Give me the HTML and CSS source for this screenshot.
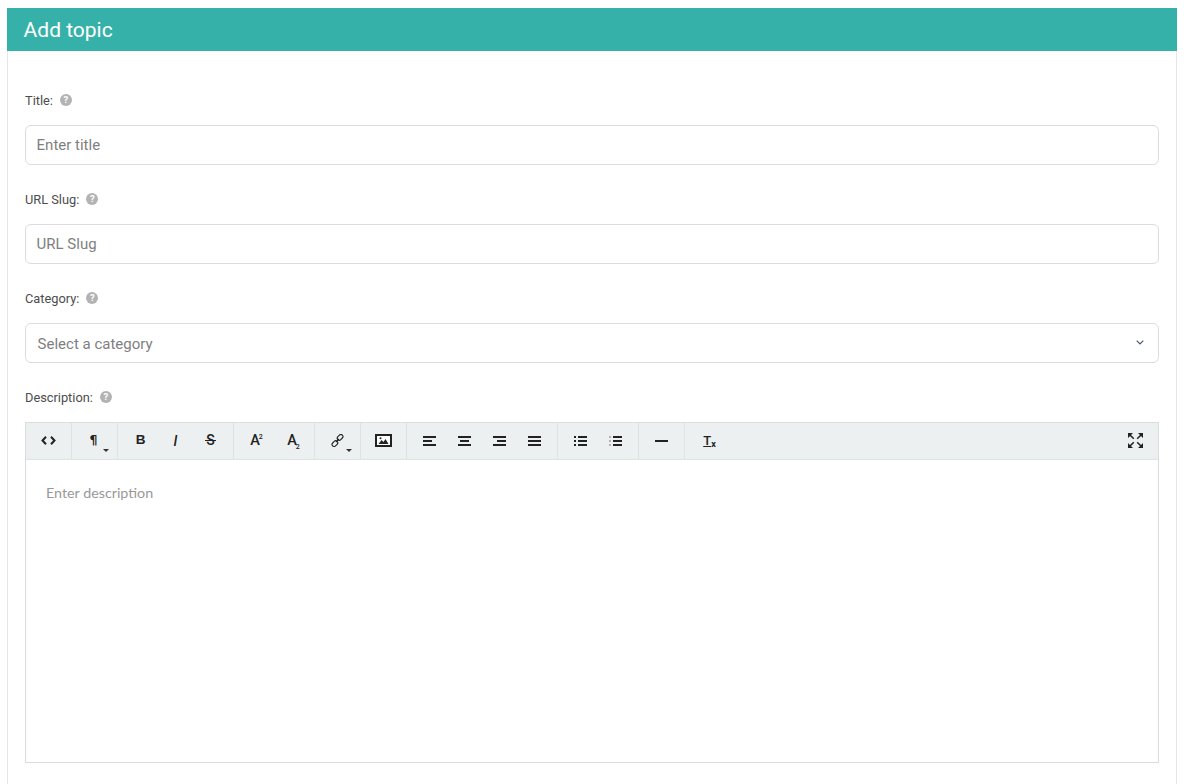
FILE: index.html
```html
<!DOCTYPE html>
<html lang="en">
<head>
<meta charset="utf-8">
<title>Add topic</title>
<link rel="stylesheet" href="styles.css">
</head>
<body>
<main class="card">
  <header class="card-header"><h1>Add topic</h1></header>
  <form class="card-body">
    <div class="field">
      <label class="label">Title: <span class="help">?</span></label>
      <input class="control" type="text" placeholder="Enter title">
    </div>
    <div class="field">
      <label class="label">URL Slug: <span class="help">?</span></label>
      <input class="control" type="text" placeholder="URL Slug">
    </div>
    <div class="field">
      <label class="label">Category: <span class="help">?</span></label>
      <div class="control select">
        <span>Select a category</span>
        <svg class="chevron" width="8" height="5" viewBox="0 0 8 5"><path d="M.7.7 4 4 7.3.7" fill="none" stroke="#44536a" stroke-width="1.1"/></svg>
      </div>
    </div>
    <div class="field">
      <label class="label">Description: <span class="help">?</span></label>
      <div class="editor">
        <div class="toolbar">
          <div class="group">
            <button type="button" class="btn"><svg width="15" height="9" viewBox="0 0 15 9"><path d="M5 .7 1.5 4.5 5 8.3M10 .7l3.5 3.8L10 8.3" fill="none" stroke="#222" stroke-width="2"/></svg></button>
          </div>
          <div class="group">
            <button type="button" class="btn"><span class="glyph para">¶</span><i class="caret"></i></button>
          </div>
          <div class="group">
            <button type="button" class="btn"><span class="glyph bold">B</span></button>
            <button type="button" class="btn"><span class="glyph italic">I</span></button>
            <button type="button" class="btn"><span class="glyph strike">S</span></button>
          </div>
          <div class="group">
            <button type="button" class="btn"><span class="glyph sized">A<sup>2</sup></span></button>
            <button type="button" class="btn shift"><span class="glyph sized">A<sub>2</sub></span></button>
          </div>
          <div class="group">
            <button type="button" class="btn"><svg class="link-icon" width="13" height="13" viewBox="0 0 14 14"><g fill="none" stroke="#222" stroke-width="1.2"><rect x="6.4" y="1.4" width="6.8" height="4.4" rx="2.2" transform="rotate(-45 9.8 3.6)"/><rect x="0.8" y="8.2" width="6.8" height="4.4" rx="2.2" transform="rotate(-45 4.2 10.4)"/><path d="M5.4 8.6 8.6 5.4"/></g></svg><i class="caret"></i></button>
          </div>
          <div class="group">
            <button type="button" class="btn"><svg width="17" height="13" viewBox="0 0 17 13"><rect x="1" y="1" width="15" height="11" fill="#fff" stroke="#222" stroke-width="2"/><path d="M3.5 10l3-4 2 2 2-3 3 5z" fill="#222"/><circle cx="5.5" cy="4.2" r="1" fill="#222"/></svg></button>
          </div>
          <div class="group">
            <button type="button" class="btn"><svg class="lines" width="13" height="10" viewBox="0 0 13 10"><path d="M0 1h13M0 5h9M0 9h13"/></svg></button>
            <button type="button" class="btn"><svg class="lines" width="13" height="10" viewBox="0 0 13 10"><path d="M0 1h13M2 5h9M0 9h13"/></svg></button>
            <button type="button" class="btn"><svg class="lines" width="13" height="10" viewBox="0 0 13 10"><path d="M0 1h13M4 5h9M0 9h13"/></svg></button>
            <button type="button" class="btn"><svg class="lines" width="13" height="10" viewBox="0 0 13 10"><path d="M0 1h13M0 5h13M0 9h13"/></svg></button>
          </div>
          <div class="group">
            <button type="button" class="btn"><svg class="lines" width="13" height="10" viewBox="0 0 13 10"><path d="M4 1h9M4 5h9M4 9h9"/><path d="M0 1h2M0 5h2M0 9h2"/></svg></button>
            <button type="button" class="btn"><svg class="lines" width="13" height="10" viewBox="0 0 13 10"><path d="M4 1h9M4 5h9M4 9h9"/><path class="thin" d="M.5 1h1M.5 5h1M.5 9h1"/></svg></button>
          </div>
          <div class="group">
            <button type="button" class="btn"><svg width="13" height="2" viewBox="0 0 13 2"><path d="M0 1h13" stroke="#222" stroke-width="2"/></svg></button>
          </div>
          <div class="group last">
            <button type="button" class="btn"><span class="glyph clear"><span class="clear-t">T</span><small>x</small></span></button>
          </div>
          <button type="button" class="btn expand"><svg width="15" height="15" viewBox="0 0 15 15"><g fill="#222"><path d="M0 0h5L0 5zM15 0h-5l5 5zM0 15h5l-5-5zM15 15h-5l5-5z"/></g><path d="M2 2l3.8 3.8M13 2 9.2 5.8M2 13l3.8-3.8M13 13 9.2 9.2" stroke="#222" stroke-width="1.5"/></svg></button>
        </div>
        <div class="editor-area">Enter description</div>
      </div>
    </div>
  </form>
</main>
</body>
</html>
```
FILE: styles.css
```css
* { box-sizing: border-box; }
html, body { height: 100%; }
body {
  margin: 0;
  padding: 8px 7px 0;
  background: #fff;
  font-family: Roboto, "Liberation Sans", sans-serif;
  overflow: hidden;
}
.card {
  height: 100%;
  border: 1px solid #e6e6e6;
  border-top: 0;
  border-bottom: 0;
}
.card-header {
  height: 43px;
  margin: 0 -1px;
  padding: 1px 17px 0 16.6px;
  display: flex;
  align-items: center;
  background: #36b1aa;
}
.card-header h1 {
  margin: 0;
  color: #fff;
  font-size: 21px;
  font-weight: 400;
  line-height: 42px;
}
.card-body { padding: 39px 17px 0; }
.field { margin-bottom: 24px; }
.label {
  display: flex;
  align-items: center;
  height: 20px;
  margin-bottom: 15px;
  color: #4c4c4c;
  font-size: 12.8px;
  gap: 7px;
}
.help {
  width: 12px;
  height: 12px;
  border-radius: 50%;
  background: #b3b3b3;
  color: #fff;
  font-size: 9.5px;
  font-weight: 700;
  line-height: 12px;
  text-align: center;
}
.control {
  display: block;
  width: 100%;
  height: 40px;
  padding: 0 11px 0 10.6px;
  border: 1px solid #dcdcdc;
  border-radius: 6px;
  background: #fff;
  color: #7f7f7f;
  font-family: Roboto, "Liberation Sans", sans-serif;
  font-size: 15px;
  outline: 0;
}
.control::placeholder { color: #7f7f7f; opacity: 1; }
.select {
  display: flex;
  align-items: center;
  justify-content: space-between;
  padding: 1px 14px 0 11.6px;
}
.chevron { margin-bottom: 2px; }
.editor {
  height: 341px;
  border: 1px solid #dcdcdc;
}
.toolbar {
  display: flex;
  height: 37px;
  background: #ecf0f1;
  border-bottom: 1px solid #dde2e4;
}
.group {
  display: flex;
  height: 36px;
  padding: 0 5px;
  border-right: 1px solid #dde2e4;
}
.group:first-child { width: 46px; }
.group.last { border-right: 0; }
.btn {
  position: relative;
  display: flex;
  align-items: center;
  justify-content: center;
  width: 35px;
  height: 36px;
  padding: 0;
  border: 0;
  background: none;
  color: #222;
  font-family: Roboto, "Liberation Sans", sans-serif;
}
.btn svg { margin-bottom: 1px; }
.btn .link-icon { margin-right: 1px; }
.expand { margin-left: auto; margin-right: 5px; }
.shift { left: 2px; }
.glyph { font-size: 14px; line-height: 1; }
.bold {
  position: relative;
  top: -1px;
  font-family: "Liberation Sans", sans-serif;
  font-weight: 700;
  font-size: 13.5px;
}
.para {
  position: relative;
  top: -1px;
  left: -1px;
  font-family: "DejaVu Sans", sans-serif;
  font-weight: 700;
  font-size: 12.5px;
}
.italic { font-style: italic; font-weight: 500; }
.strike {
  position: relative;
  top: -1px;
  font-size: 14px;
  font-weight: 500;
}
.strike::after {
  content: "";
  position: absolute;
  left: -1px;
  right: -1px;
  top: 7px;
  height: 1px;
  background: #222;
}
.sized { font-weight: 500; font-size: 14.5px; }
.sized sup, .sized sub { font-size: 7px; line-height: 0; margin-left: -1px; }
.clear { position: relative; left: 2px; top: -1px; font-weight: 500; }
.clear-t { text-decoration: underline; font-size: 13px; }
.clear small {
  position: relative;
  top: 2px;
  font-size: 9px;
  font-weight: 700;
}
.caret {
  position: absolute;
  right: 3px;
  bottom: 7px;
  border: 3px solid transparent;
  border-top-color: #333;
  border-bottom: 0;
}
.lines path { fill: none; stroke: #222; stroke-width: 2; }
.lines .thin { stroke: #777; }
.editor-area {
  padding: 23px 20px;
  color: #999;
  font-family: Lato, "Open Sans", sans-serif;
  font-size: 14.3px;
  line-height: 20px;
}
```
